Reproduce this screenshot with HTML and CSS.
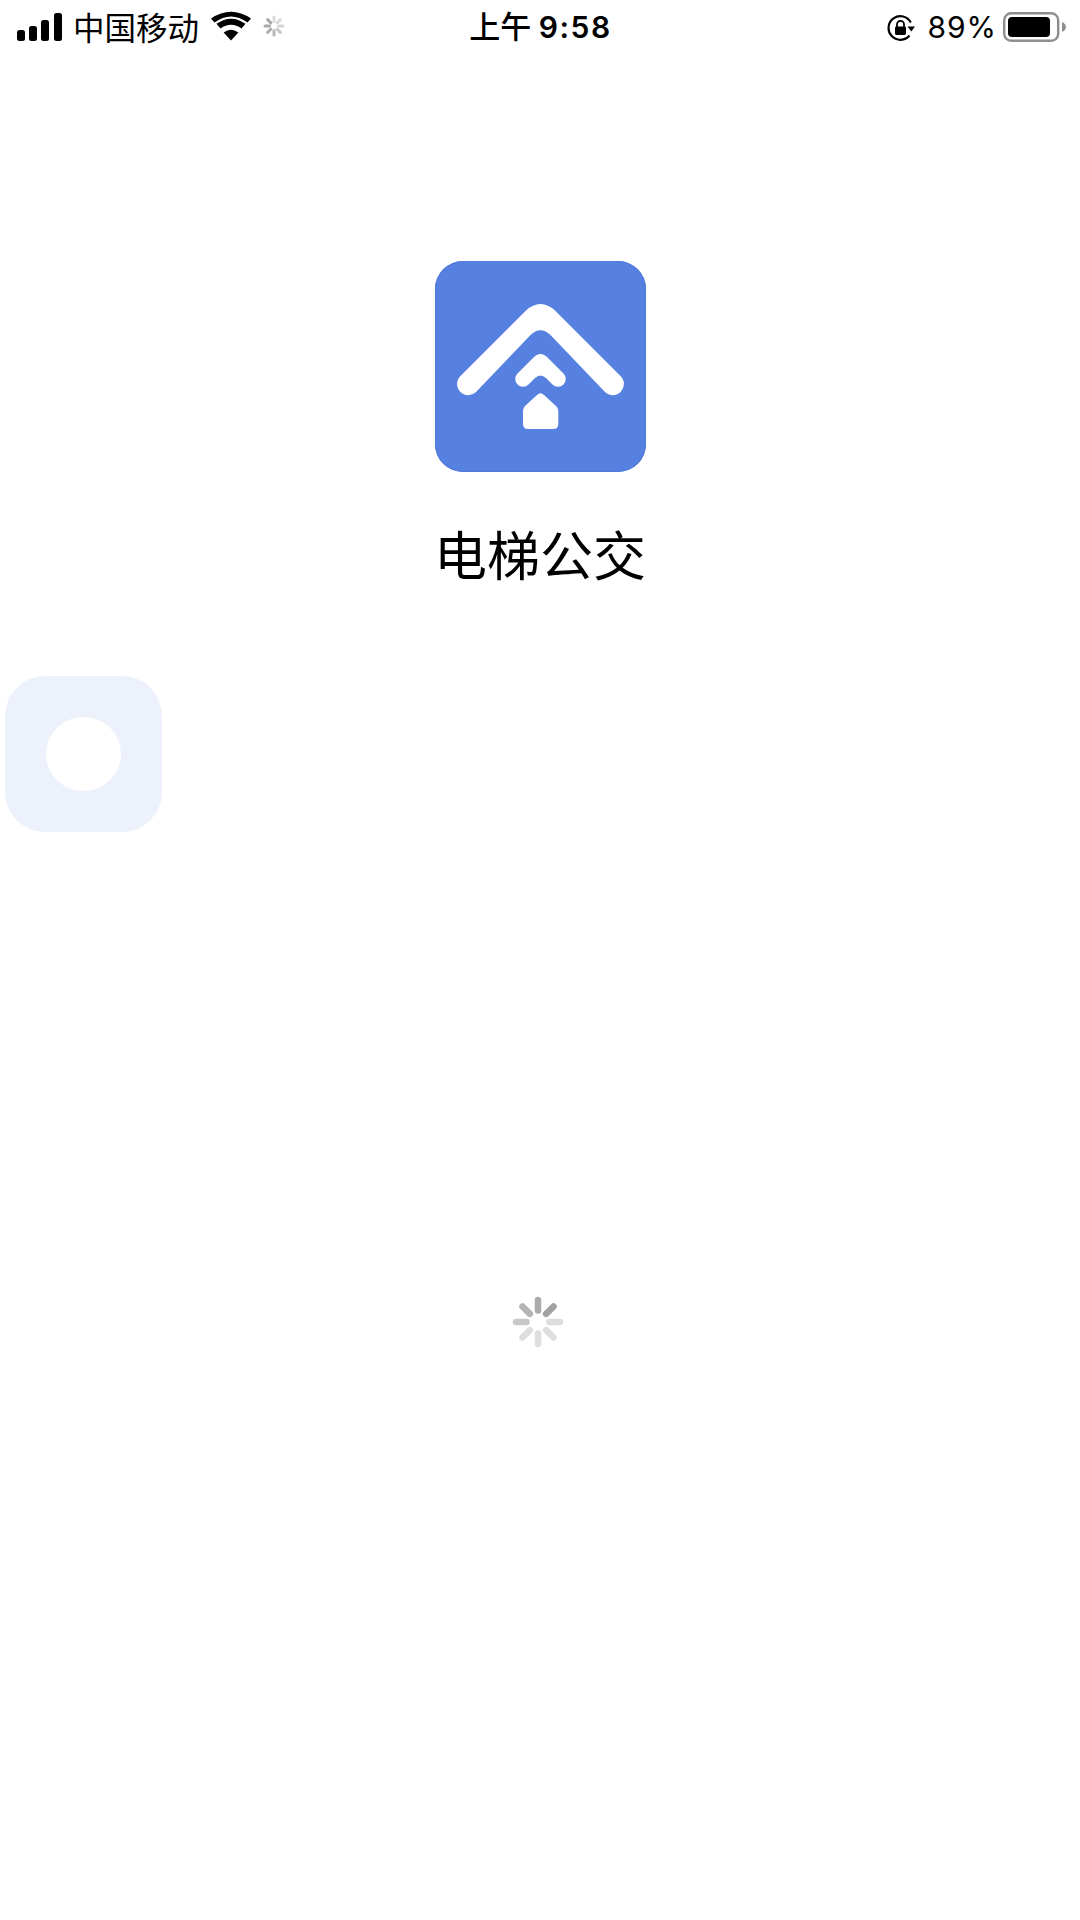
FILE: index.html
```html
<!DOCTYPE html>
<html lang="zh-CN">
<head>
<meta charset="utf-8">
<title>电梯公交</title>
<link rel="stylesheet" href="styles.css">
</head>
<body>
<div class="page">
  <header class="status">
    <div class="status-left">
      <svg class="signal" width="45" height="28" viewBox="0 0 45 28">
        <rect x="0" y="17" width="8" height="11" rx="2.5"/>
        <rect x="12" y="13" width="8" height="15" rx="2.5"/>
        <rect x="24" y="7" width="8" height="21" rx="2.5"/>
        <rect x="37" y="0" width="8" height="28" rx="2.5"/>
      </svg>
      <span class="carrier">中国移动</span>
      <svg class="wifi" width="40" height="30" viewBox="0 0 40 30">
        <path d="M20 29.500 L12.600 21.500 Q20 16 27.400 21.500 Z"/>
        <path d="M9.500 17.500 L5.500 12.800 Q20 2.500 34.500 12.800 L30.500 17.500 Q20 10 9.500 17.500 Z"/>
        <path d="M3.500 10.500 L0 6.500 Q20 -7 40 6.500 L36.500 10.500 Q20 -1.500 3.500 10.500 Z" transform="translate(0 1)"/>
      </svg>
      <svg class="mini-spin" width="22" height="22" viewBox="-11 -11 22 22">
        <g stroke-width="3" stroke-linecap="round">
          <line y1="-4.500" y2="-9" stroke="#dcdcdc"/>
          <line y1="-4.500" y2="-9" stroke="#dcdcdc" transform="rotate(45)"/>
          <line y1="-4.500" y2="-9" stroke="#d4d4d4" transform="rotate(90)"/>
          <line y1="-4.500" y2="-9" stroke="#c8c8c8" transform="rotate(135)"/>
          <line y1="-4.500" y2="-9" stroke="#b8b8b8" transform="rotate(180)"/>
          <line y1="-4.500" y2="-9" stroke="#b0b0b0" transform="rotate(225)"/>
          <line y1="-4.500" y2="-9" stroke="#a8a8a8" transform="rotate(270)"/>
          <line y1="-4.500" y2="-9" stroke="#a8a8a8" transform="rotate(315)"/>
        </g>
      </svg>
    </div>
    <div class="status-time"><span class="time-period">上午</span> <span class="time-clock">9:58</span></div>
    <div class="status-right">
      <svg class="rotlock" width="28" height="28" viewBox="0 0 28 28">
        <path d="M22.500 21.500 A11.800 11.800 0 1 1 23.800 8.500" fill="none" stroke="#000" stroke-width="2.200"/>
        <path d="M20.500 12.500 L28 12.500 L24.300 17.500 Z"/>
        <path d="M10 13 V10.300 a3.500 3.500 0 0 1 7 0 V13" fill="none" stroke="#000" stroke-width="1.800"/>
        <rect x="8" y="12.500" width="11" height="8.500" rx="1.400"/>
      </svg>
      <span class="battery-pct">89%</span>
      <svg class="battery" width="63" height="30" viewBox="0 0 63 30">
        <rect x="1.200" y="1.200" width="54" height="27.600" rx="7" fill="none" stroke="#8e8e8e" stroke-width="2.400"/>
        <rect x="5" y="5" width="42" height="20" rx="4"/>
        <path d="M59 10 Q63 12 63 15 Q63 18 59 20 Z" fill="#8e8e8e"/>
      </svg>
    </div>
  </header>

  <main class="main">
    <div class="brand">
      <div class="logo">
        <svg width="211" height="211" viewBox="0 0 211 211">
          <path class="logo-mark" d="M25.500 115 L91 49.500 Q98 43 105.500 43 Q113 43 120 49.500 L185.500 115 A10.800 10.800 0 0 1 170 131 L115 73.500 Q105.500 65 96 73.500 L41 131 A10.800 10.800 0 0 1 25.500 115 Z"/>
          <path class="logo-mark" d="M82.500 112.500 L98 97 Q105.500 89 113 97 L128.500 112.500 A7.700 7.700 0 0 1 117.500 123.500 L111 117 Q105.500 112 100 117 L93.500 123.500 A7.700 7.700 0 0 1 82.500 112.500 Z"/>
          <path class="logo-mark" d="M88 150 Q88 147 90 145 L102 134 Q105.500 130.500 109 134 L121 145 Q123.300 147 123.300 150 V163 Q123.300 168 118 168 H93 Q88 168 88 163 Z"/>
        </svg>
      </div>
      <h1 class="title">电梯公交</h1>
    </div>
    <div class="placeholder"><span class="placeholder-hole"></span></div>
    <svg class="spinner" width="54" height="54" viewBox="-27 -27 54 54">
      <g stroke-width="6.500" stroke-linecap="round">
        <line y1="-11.500" y2="-22" stroke="#ababab"/>
        <line y1="-11.500" y2="-22" stroke="#a2a2a2" transform="rotate(45)"/>
        <line y1="-11.500" y2="-22" stroke="#dcdcdc" transform="rotate(90)"/>
        <line y1="-11.500" y2="-22" stroke="#dedede" transform="rotate(135)"/>
        <line y1="-11.500" y2="-22" stroke="#dedede" transform="rotate(180)"/>
        <line y1="-11.500" y2="-22" stroke="#dedede" transform="rotate(225)"/>
        <line y1="-11.500" y2="-22" stroke="#c8c8c8" transform="rotate(270)"/>
        <line y1="-11.500" y2="-22" stroke="#b4b4b4" transform="rotate(315)"/>
      </g>
    </svg>
  </main>
</div>
</body>
</html>
```

FILE: styles.css
```css
* { box-sizing: border-box; }
html, body { margin: 0; padding: 0; background: #fff; }
body {
  width: 1080px;
  height: 1920px;
  overflow: hidden;
  color: #000;
  font-family: "Inter", "Noto Sans CJK SC", sans-serif;
}
.page { display: flex; flex-direction: column; height: 1920px; }

.status {
  display: grid;
  grid-template-columns: 1fr auto 1fr;
  align-items: center;
  height: 54px;
  padding: 0 14px 0 17px;
}
.status-left, .status-right { display: flex; align-items: center; }
.status-right { justify-content: flex-end; }
.signal { margin-top: -1px; }
.carrier {
  margin: -3px 0 0 11px;
  font: 400 31.5px/50px "Noto Sans CJK SC", sans-serif;
}
.wifi { margin-left: 12px; margin-top: -2px; }
.mini-spin { margin-left: 12px; margin-top: -3px; }
.status-time {
  margin-left: -2px;
  font: 600 30px/50px "Inter", "Noto Sans CJK SC", sans-serif;
  white-space: nowrap;
}
.time-period { font-weight: 500; font-size: 31px; }
.time-clock { letter-spacing: 1.500px; }
.rotlock { margin-top: 1px; }
.battery-pct {
  margin-left: 12px;
  font: 400 30px/50px "Inter", sans-serif;
  letter-spacing: 1px;
}
.battery { margin-left: 6px; }

.main { display: flex; flex-direction: column; }
.brand { display: flex; flex-direction: column; align-items: center; margin-top: 207px; }
.logo {
  width: 211px;
  height: 211px;
  border-radius: 28px;
  background: #5681e0;
  box-shadow: inset 0 0 0 1px #4f79da;
}
.logo svg { display: block; }
.logo-mark { fill: #fff; }
.title {
  margin: 43px 0 0;
  font: 400 53px/76px "Noto Sans CJK SC", sans-serif;
  color: #000;
}
.placeholder {
  display: flex;
  align-items: center;
  justify-content: center;
  width: 157px;
  height: 156px;
  margin: 85px 0 0 5px;
  border-radius: 40px;
  background: #ecf1fb;
}
.placeholder-hole { width: 75px; height: 74px; border-radius: 50%; background: #fff; }
.spinner { align-self: flex-start; margin: 463px 0 0 511px; }
```
